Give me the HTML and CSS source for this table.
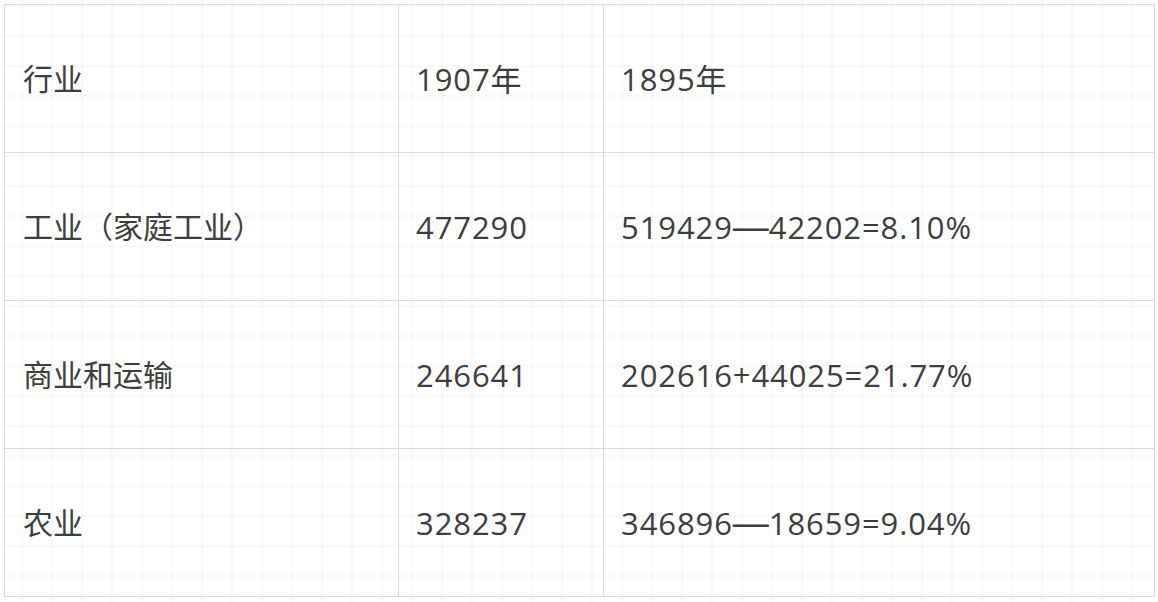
FILE: index.html
```html
<!DOCTYPE html>
<html lang="zh">
<head>
<meta charset="utf-8">
<link rel="stylesheet" href="styles.css">
</head>
<body>
<table class="data">
  <colgroup>
    <col class="c1"><col class="c2"><col class="c3">
  </colgroup>
  <tr><td class="label">行业</td><td>1907年</td><td>1895年</td></tr>
  <tr><td class="label">工业（家庭工业）</td><td>477290</td><td>519429<span class="dash">—</span>42202=8.10%</td></tr>
  <tr><td class="label">商业和运输</td><td>246641</td><td>202616+44025=21.77%</td></tr>
  <tr><td class="label">农业</td><td>328237</td><td>346896<span class="dash">—</span>18659=9.04%</td></tr>
</table>
</body>
</html>
```
FILE: styles.css
```css
html, body {
  margin: 0;
  padding: 0;
}
body {
  width: 1158px;
  height: 602px;
  padding: 4px;
  box-sizing: border-box;
  background-color: #ffffff;
  background-image:
    linear-gradient(to right, transparent 0, rgba(0,0,0,0.014) 0, rgba(0,0,0,0.026) 1px, rgba(0,0,0,0.014) 2px, transparent 3px),
    linear-gradient(to bottom, transparent 0, rgba(0,0,0,0.014) 0, rgba(0,0,0,0.026) 1px, rgba(0,0,0,0.014) 2px, transparent 3px);
  background-size: 30px 30px;
  background-position: 21px 5px;
  font-family: "Open Sans", "Noto Sans CJK SC", sans-serif;
  color: #3d3d3d;
  overflow: hidden;
}
.data {
  border-collapse: collapse;
  width: 1150px;
  table-layout: fixed;
}
.c1 { width: 394px; }
.c2 { width: 205px; }
.c3 { width: 551px; }
.data tr {
  height: 148px;
}
.data td {
  border: 1px solid #dcdcdc;
  padding: 0 17px;
  font-size: 31px;
  line-height: 40px;
  letter-spacing: 0.9px;
  vertical-align: middle;
  white-space: nowrap;
}
.data td.label {
  padding-left: 18px;
  font-size: 30px;
  letter-spacing: 0;
}
.dash {
  font-family: "Liberation Sans", sans-serif;
  font-size: 36px;
  letter-spacing: 0;
  line-height: 1;
}
```
